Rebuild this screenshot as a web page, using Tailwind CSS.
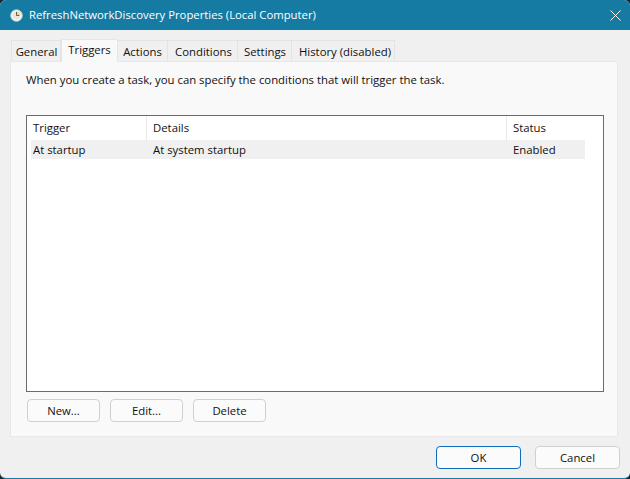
<!DOCTYPE html>
<html><head><meta charset="utf-8">
<script src="https://cdn.jsdelivr.net/npm/@tailwindcss/browser@4"></script>
</head>
<body class="m-0 bg-[#0f2a36]">
<div class="w-[630px] h-[479px] overflow-hidden flex flex-col bg-[#f0f0f0] rounded-[6px] border-b border-b-[#167ba3] font-['Open_Sans','Noto_Sans',sans-serif] text-[11.35px] leading-[16px] text-[#111]">
  <div class="h-[30px] shrink-0 bg-[#167ba3] flex items-center pl-[10px] pr-[9px] text-white text-[11.3px]">
    <svg class="w-[13px] h-[13px] mr-[6px]" viewBox="0 0 14 14">
      <circle cx="7" cy="7" r="6.3" fill="#e8e6df" stroke="#cfcfcf" stroke-width="0.8"/>
      <path d="M7 7V2.2A4.8 4.8 0 0 1 11.8 7Z" fill="#ecd68a"/>
      <circle cx="7" cy="7" r="4.8" fill="none" stroke="#fff" stroke-width="0.8"/>
      <path d="M7 3.2V7H10" fill="none" stroke="#555" stroke-width="1"/>
    </svg>
    <span>RefreshNetworkDiscovery Properties (Local Computer)</span>
    <svg class="ml-auto w-[11px] h-[11px]" viewBox="0 0 11 11"><path d="M0.5 0.5L10.5 10.5M10.5 0.5L0.5 10.5" stroke="#fff" stroke-width="1" fill="none"/></svg>
  </div>
  <div class="flex items-end h-[31px] shrink-0 pl-[11px] relative z-10">
    <div class="w-[50px] h-[21px] pt-[1px] pl-[1px] flex items-center justify-center bg-[#f0f0f0] border border-[#e3e3e3] border-b-0">General</div>
    <div class="w-[57px] h-[23px] flex items-start pt-[2px] justify-center bg-[#f9f9f9] border border-[#e6e6e6] border-b-0 -mb-[1px]">Triggers</div>
    <div class="w-[50px] h-[21px] pt-[1px] flex items-center justify-center bg-[#f0f0f0] border border-[#e3e3e3] border-b-0 border-l-0">Actions</div>
    <div class="w-[70px] h-[21px] pt-[1px] pl-[2px] flex items-center justify-center bg-[#f0f0f0] border border-[#e3e3e3] border-b-0 border-l-0">Conditions</div>
    <div class="w-[54px] h-[21px] pt-[1px] pl-[1px] flex items-center justify-center bg-[#f0f0f0] border border-[#e3e3e3] border-b-0 border-l-0">Settings</div>
    <div class="w-[103px] h-[21px] pt-[1px] pl-[4px] flex items-center justify-center bg-[#f0f0f0] border border-[#e3e3e3] border-b-0 border-l-0">History (disabled)</div>
  </div>
  <div class="ml-[10px] mr-[12px] h-[376px] shrink-0 bg-[#f9f9f9] border border-[#e8e8e8] pt-[10px] px-[15px] flex flex-col">
    <p class="h-[16px] m-0 whitespace-nowrap">When you create a task, you can specify the conditions that will trigger the task.</p>
    <div class="mt-[27px] h-[277px] w-[578px] bg-white border border-[#6b6b6b] pl-[4px]">
      <div class="flex h-[24px] w-[554px] items-center">
        <div class="w-[116px] h-full border-r border-[#e8e8e8] pl-[2px] flex items-center">Trigger</div>
        <div class="w-[360px] h-full border-r border-[#e8e8e8] pl-[6px] flex items-center">Details</div>
        <div class="pl-[6px]">Status</div>
      </div>
      <div class="flex h-[19px] w-[554px] items-center bg-[#f0f0f0]">
        <div class="w-[116px] pl-[2px]">At startup</div>
        <div class="w-[360px] pl-[6px]">At system startup</div>
        <div class="pl-[6px]">Enabled</div>
      </div>
    </div>
    <div class="flex gap-[10px] mt-[7px] ml-[1px]">
      <button class="w-[73px] h-[23px] rounded-[4px] bg-[#fbfbfb] border border-[#d0d0d0] flex items-center justify-center">New...</button>
      <button class="w-[73px] h-[23px] rounded-[4px] bg-[#fbfbfb] border border-[#d0d0d0] flex items-center justify-center">Edit...</button>
      <button class="w-[73px] h-[23px] rounded-[4px] bg-[#fbfbfb] border border-[#d0d0d0] flex items-center justify-center">Delete</button>
    </div>
  </div>
  <div class="flex justify-end gap-[14px] pr-[10px] mt-[9px]">
    <button class="w-[85px] h-[23px] rounded-[4px] bg-[#fbfbfb] border border-[#0f6cbd] flex items-center justify-center">OK</button>
    <button class="w-[85px] h-[23px] rounded-[4px] bg-[#fbfbfb] border border-[#d0d0d0] flex items-center justify-center">Cancel</button>
  </div>
</div>
</body></html>
